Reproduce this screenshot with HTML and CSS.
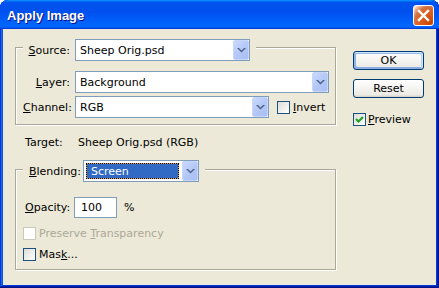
FILE: index.html
```html
<!DOCTYPE html>
<html lang="en">
<head>
  <meta charset="UTF-8">
  <title>Apply Image</title>
  <link rel="stylesheet" href="styles.css">
</head>
<body>
  <div class="window">
    <div class="title-bar">
      <span class="title">Apply Image</span>
      <span class="close">
        <svg width="19" height="19" viewBox="0 0 19 19"><path d="M5 5L14 14M14 5L5 14" stroke="#fff" stroke-width="2.4" stroke-linecap="square"/></svg>
      </span>
    </div>

    <div class="client">
      <div class="main">
        <div class="group">
          <div class="row legend">
            <label class="lbl"><u>S</u>ource:</label>
            <div class="combo w-source">
              <span class="val">Sheep Orig.psd</span>
              <span class="drop"><svg width="9" height="5" viewBox="0 0 9 5"><path d="M0 0h2l2.5 2.5L7 0h2L4.5 4.5z" fill="#4d6185"/></svg></span>
            </div>
          </div>
          <div class="row row-layer">
            <label class="lbl"><u>L</u>ayer:</label>
            <div class="combo w-layer">
              <span class="val">Background</span>
              <span class="drop"><svg width="9" height="5" viewBox="0 0 9 5"><path d="M0 0h2l2.5 2.5L7 0h2L4.5 4.5z" fill="#4d6185"/></svg></span>
            </div>
          </div>
          <div class="row row-channel">
            <label class="lbl"><u>C</u>hannel:</label>
            <div class="combo w-channel">
              <span class="val">RGB</span>
              <span class="drop"><svg width="9" height="5" viewBox="0 0 9 5"><path d="M0 0h2l2.5 2.5L7 0h2L4.5 4.5z" fill="#4d6185"/></svg></span>
            </div>
            <span class="check invert-box"></span>
            <span class="check-text"><u>I</u>nvert</span>
          </div>
        </div>

        <div class="target">
          <span class="target-lbl">Target:</span>
          <span>Sheep Orig.psd (RGB)</span>
        </div>

        <div class="group group-blend">
          <div class="row legend legend-blend">
            <label class="blend-lbl"><u>B</u>lending:</label>
            <div class="combo w-blend">
              <span class="val focus">Screen</span>
              <span class="drop"><svg width="9" height="5" viewBox="0 0 9 5"><path d="M0 0h2l2.5 2.5L7 0h2L4.5 4.5z" fill="#4d6185"/></svg></span>
            </div>
          </div>
          <div class="row row-opacity">
            <label class="opacity-lbl"><u>O</u>pacity:</label>
            <div class="field">100</div>
            <span class="pct">%</span>
          </div>
          <div class="row row-check disabled">
            <span class="check"></span>
            <span class="check-text">Preserve <u>T</u>ransparency</span>
          </div>
          <div class="row row-check row-mask">
            <span class="check"></span>
            <span class="check-text">Mas<u>k</u>...</span>
          </div>
        </div>
      </div>

      <div class="side">
        <button class="btn btn-default">OK</button>
        <button class="btn">Reset</button>
        <div class="preview">
          <span class="check checked">
            <svg width="11" height="11" viewBox="0 0 11 11"><path d="M2 5l2.5 2.5L9 3" fill="none" stroke="#21a121" stroke-width="2.2"/></svg>
          </span>
          <span class="preview-text"><u>P</u>review</span>
        </div>
      </div>
    </div>
  </div>
</body>
</html>
```

FILE: styles.css
```css
body {
  margin: 0;
  background: #fff;
  font-family: "DejaVu Sans", sans-serif;
  font-size: 11px;
  color: #000;
}
.window {
  width: 439px;
  height: 288px;
  box-sizing: border-box;
  display: flex;
  flex-direction: column;
  background: #0055e5;
  border-radius: 8px 8px 0 0;
  padding-bottom: 3px;
  box-shadow: inset -1px -1px #00138c, inset 1px 1px #0831d9, inset -2px -2px #001ea0, inset 2px 2px #166aee, inset -3px -3px #003bda, inset 3px 3px #0855dd;
  overflow: hidden;
}
.title-bar {
  height: 29px;
  flex: none;
  display: flex;
  align-items: flex-start;
  justify-content: space-between;
  padding: 0 5px 0 7px;
  border-radius: 8px 8px 0 0;
  background: linear-gradient(180deg, #0997ff, #0053ee 8%, #0050ee 40%, #06f 88%, #06f 93%, #005bff 95%, #003dd7 96%, #003dd7);
}
.title {
  margin-top: 8px;
  font-family: "Liberation Sans", sans-serif;
  font-weight: bold;
  font-size: 13px;
  line-height: 15px;
  color: #fff;
  text-shadow: 1px 1px #0f1089;
}
.close {
  margin-top: 5px;
  width: 21px;
  height: 21px;
  box-sizing: border-box;
  border: 1px solid #fff;
  border-radius: 3px;
  background: radial-gradient(circle at 90% 90%, #cc4600 0%, #dc6527 55%, #cd7546 70%, #ffccb2 90%, #fff 100%);
  display: flex;
}
.client {
  flex: 1;
  margin: 0 3px;
  background: #ece9d8;
  display: flex;
  padding-left: 12px;
}
.main {
  width: 322px;
  padding-top: 18px;
}
.side {
  margin-left: 16px;
  padding-top: 22px;
  width: 71px;
  display: flex;
  flex-direction: column;
  align-items: flex-start;
}

/* group boxes */
.group {
  width: 321px;
  box-sizing: border-box;
  border: 1px solid #aca899;
  box-shadow: 1px 1px 0 #fff, inset 1px 1px 0 #fff;
  display: flex;
  flex-direction: column;
  align-items: flex-start;
  padding-bottom: 6px;
}
.row {
  display: flex;
  align-items: center;
  margin-left: 7px;
}
.legend {
  margin-top: -9px;
  background: #ece9d8;
  padding-right: 6px;
}
.lbl {
  width: 47px;
  margin-right: 5px;
  text-align: right;
}
.row-layer { margin-top: 10px; }
.row-channel { margin-top: 3px; }

/* combo boxes */
.combo {
  height: 22px;
  box-sizing: border-box;
  border: 1px solid #7f9db9;
  background: #fff;
  display: flex;
}
.w-source { width: 175px; }
.w-layer { width: 254px; }
.w-channel { width: 194px; }
.w-blend { width: 116px; }
.val {
  flex: 1;
  display: flex;
  align-items: center;
  padding-left: 4px;
}
.drop {
  width: 16px;
  box-sizing: border-box;
  border: 1px solid #c7d6fb;
  border-radius: 2px;
  background: linear-gradient(135deg, #c9d8fd, #b1c6f6 60%, #a9bff3);
  display: flex;
  align-items: center;
  justify-content: center;
}

/* checkboxes */
.check {
  width: 13px;
  height: 13px;
  box-sizing: border-box;
  border: 1px solid #1c5180;
  background: linear-gradient(135deg, #dcdcd7, #fff);
  display: flex;
  align-items: center;
  justify-content: center;
  flex: none;
}
.check-text { margin-left: 3px; }
.invert-box { margin-left: 8px; }
.disabled .check {
  border-color: #cac8bb;
  background: #fff;
}
.disabled .check-text { color: #aca899; }

/* target */
.target {
  margin-top: 11px;
  padding-left: 10px;
  height: 14px;
  line-height: 14px;
  display: flex;
}
.target-lbl { width: 53px; }

/* blending group */
.group-blend {
  margin-top: 19px;
  padding-bottom: 8px;
}
.legend-blend {
  margin-top: -10px;
  padding-left: 6px;
}
.blend-lbl { width: 54px; }
.focus {
  margin: 2px 3px 2px 2px;
  padding-left: 4px;
  color: #fff;
  border: 1px dotted #000;
  background: linear-gradient(#316ac5, #316ac5) padding-box, linear-gradient(#e8a33a, #e8a33a) border-box;
}
.row-opacity {
  margin-top: 15px;
  padding-left: 2px;
}
.opacity-lbl { width: 49px; }
.field {
  width: 43px;
  height: 21px;
  box-sizing: border-box;
  border: 1px solid #7f9db9;
  background: #fff;
  padding-left: 6px;
  line-height: 19px;
}
.pct { margin-left: 7px; }
.row-check { margin-top: 9px; }
.row-mask { margin-top: 8px; }

/* buttons */
.btn {
  width: 71px;
  height: 19px;
  padding: 0;
  border: 1px solid #003c74;
  border-radius: 3px;
  background: linear-gradient(180deg, #fff, #ecebe6 86%, #d6d0c5);
  font-family: "DejaVu Sans", sans-serif;
  font-size: 11px;
  color: #000;
}
.btn-default {
  margin-bottom: 9px;
  box-shadow: inset -1px 1px #cee7ff, inset 1px 2px #98b8ea, inset -2px 2px #bcd4f6, inset 1px -1px #89ade4, inset 2px -2px #89ade4;
}
.preview {
  margin-top: 15px;
  display: flex;
  align-items: center;
}
.preview-text { margin-left: 2px; }
```
